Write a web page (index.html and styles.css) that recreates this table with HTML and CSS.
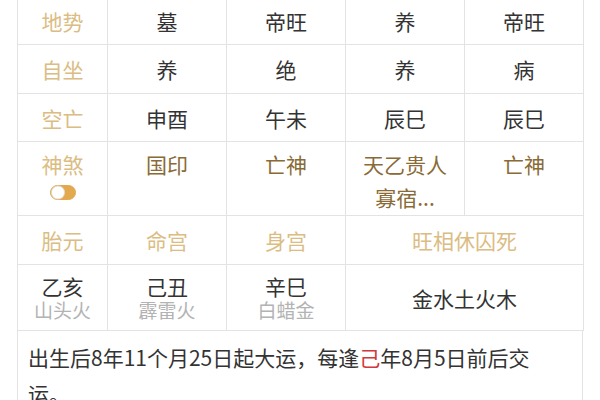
FILE: index.html
```html
<!DOCTYPE html>
<html lang="zh">
<head>
<meta charset="utf-8">
<link rel="stylesheet" href="styles.css">
</head>
<body>
<div class="wrap">
<table class="grid">
  <colgroup>
    <col class="c-label"><col class="c-val"><col class="c-val"><col class="c-val"><col class="c-val">
  </colgroup>
  <tr class="r1">
    <td class="label">地势</td><td>墓</td><td>帝旺</td><td>养</td><td>帝旺</td>
  </tr>
  <tr class="r2">
    <td class="label">自坐</td><td>养</td><td>绝</td><td>养</td><td>病</td>
  </tr>
  <tr class="r3">
    <td class="label">空亡</td><td>申酉</td><td>午未</td><td>辰巳</td><td>辰巳</td>
  </tr>
  <tr class="r4">
    <td class="label top">神煞
      <span class="toggle"><svg width="26" height="15" viewBox="0 0 26 15"><rect x="0.5" y="0.5" width="25" height="14" rx="7" fill="#e2a94e" stroke="#e2a94e"/><circle cx="8" cy="7.5" r="6.6" fill="#fff" stroke="#d8d8d8" stroke-width="0.8"/></svg></span>
    </td>
    <td class="shen">国印</td><td class="shen">亡神</td><td class="shen">天乙贵人<br>寡宿...</td><td class="shen">亡神</td>
  </tr>
  <tr class="r5">
    <td class="label">胎元</td><td class="label">命宫</td><td class="label">身宫</td><td class="label" colspan="2">旺相休囚死</td>
  </tr>
  <tr class="r6">
    <td class="pillar"><span class="gz">乙亥</span><span class="ny">山头火</span></td>
    <td class="pillar"><span class="gz">己丑</span><span class="ny">霹雷火</span></td>
    <td class="pillar"><span class="gz">辛巳</span><span class="ny">白蜡金</span></td>
    <td colspan="2">金水土火木</td>
  </tr>
</table>
<div class="note">出生后8年11个月25日起大运，每逢<span class="red">己</span>年8月5日前后交运。</div>
</div>
</body>
</html>
```

FILE: styles.css
```css
html, body {
  margin: 0;
  padding: 0;
  background: #fff;
}
body {
  font-family: "Noto Sans CJK SC", "Noto Sans", sans-serif;
  color: #333;
  overflow: hidden;
}
.wrap {
  width: 566px;
  margin: -3px 0 0 17px;
}
.grid {
  width: 566px;
  border-collapse: collapse;
  table-layout: fixed;
}
.c-label { width: 90px; }
.c-val { width: 119px; }
.grid td {
  border: 1px solid #e3e3e3;
  text-align: center;
  vertical-align: middle;
  font-size: 21px;
  line-height: 28px;
  padding: 0;
  color: #333;
}
.r1 td { height: 46px; }
.r2 td { height: 48px; }
.r3 td { height: 47px; }
.r4 td { height: 73px; }
.r5 td { height: 48px; }
.r6 td { height: 65px; }
.grid td.label { color: #dbbd84; }
.grid td.top,
.grid td.shen {
  vertical-align: top;
  padding-top: 6px;
  line-height: 33px;
  height: 67px;
}
.grid td.shen { color: #8a6a36; }
.toggle {
  display: block;
  height: 15px;
  line-height: 0;
  margin-top: 4px;
}
.pillar .gz,
.pillar .ny {
  display: block;
  line-height: 23px;
}
.pillar .ny {
  color: #b3b3b3;
  font-size: 19px;
}
.note {
  border-left: 1px solid #e3e3e3;
  border-right: 1px solid #e3e3e3;
  padding: 8px 34px 20px 10px;
  font-size: 21px;
  line-height: 36px;
  color: #333;
}
.red { color: #d0393e; }
```
